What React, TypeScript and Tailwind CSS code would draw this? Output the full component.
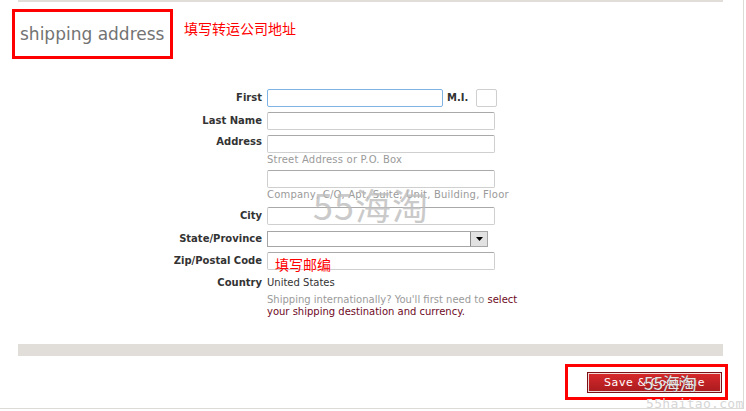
import React from "react"

const font = "font-['DejaVu_Sans','Noto_Sans_CJK_SC',sans-serif]"
const cjk = "font-['Noto_Sans_CJK_SC',sans-serif]"

const Field = ({ label, children }: { label?: string; children: React.ReactNode }) => (
  <div className="flex items-center">
    <div className="w-[103px] pr-[1px] text-right text-[10px] font-bold leading-[12px] text-[#333]">{label}</div>
    <div className="ml-[4px]">{children}</div>
  </div>
)

const Input = ({ w = "w-[228px]", focus = false }: { w?: string; focus?: boolean }) => (
  <div
    className={`h-[18px] rounded-[2px] border bg-white ${w} ${
      focus ? "border-[#7fb3e3]" : "border-[#cfcfcf] border-t-[#a9a9a9]"
    }`}
  />
)

const Hint = ({ children }: { children: React.ReactNode }) => (
  <div className="ml-[107px] h-[13px] whitespace-nowrap text-[10px] leading-[13px] tracking-[0.2px] text-[#9a9a9a]">
    {children}
  </div>
)

export default function App() {
  return (
    <div className={`relative h-[411px] w-[746px] overflow-hidden bg-white ${font}`}>
      <div className="h-[409px] w-[744px] border-b border-r border-[#dedad6]">
        <div className="ml-[18px] h-[2px] w-[705px] bg-[#e1ddd9]" />

        <div className="mt-[7px] flex items-start">
          <div className="ml-[12px] flex h-[50px] w-[161px] items-center border-[3px] border-[#ff0000] pl-[5px]">
            <span className="whitespace-nowrap text-[17px] leading-none text-[#737373]">shipping address</span>
          </div>
          <span className={`ml-[11px] mt-[12px] text-[14px] leading-none text-[#ff0000] ${cjk}`}>填写转运公司地址</span>
        </div>

        <div className="ml-[160px] mt-[30px] flex flex-col">
          <div className="flex items-center">
            <Field label="First">
              <Input w="w-[176px]" focus />
            </Field>
            <span className="ml-[4px] text-[10px] font-bold leading-[12px] text-[#333]">M.I.</span>
            <div className="ml-[8px] h-[18px] w-[21px] rounded-[2px] border border-[#cfcfcf]" />
          </div>
          <div className="mt-[5px]">
            <Field label="Last Name">
              <Input />
            </Field>
          </div>
          <div className="mt-[5px] flex items-start">
            <div className="mt-[1px] w-[103px] pr-[1px] text-right text-[10px] font-bold leading-[12px] text-[#333]">
              Address
            </div>
            <div className="ml-[4px]">
              <Input />
            </div>
          </div>
          <Hint>Street Address or P.O. Box</Hint>
          <div className="ml-[107px] mt-[4px]">
            <Input />
          </div>
          <Hint>Company, C/O, Apt, Suite, Unit, Building, Floor</Hint>
          <div className="mt-[6px]">
            <Field label="City">
              <Input />
            </Field>
          </div>
          <div className="mt-[6px]">
            <Field label="State/Province">
              <div className="flex h-[16px] w-[221px] items-stretch border border-[#a6a6a6] bg-white">
                <div className="flex-1" />
                <div className="flex w-[17px] items-center justify-center border-l border-[#8a8a8a] bg-[#e2e2e2]">
                  <svg width="7" height="4" viewBox="0 0 7 4">
                    <path d="M0 0h7L3.5 4z" fill="#000" />
                  </svg>
                </div>
              </div>
            </Field>
          </div>
          <div className="mt-[5px]">
            <Field label="Zip/Postal Code">
              <div className="relative">
                <Input />
                <span className={`absolute left-[8px] top-[5px] text-[14px] leading-none text-[#ff0000] ${cjk}`}>
                  填写邮编
                </span>
              </div>
            </Field>
          </div>
          <div className="mt-[7px]">
            <Field label="Country">
              <span className="block text-[10px] leading-[12px] text-[#333]">United States</span>
            </Field>
          </div>
          <div className="ml-[107px] mt-[5px] w-[256px] text-[10px] leading-[12px] text-[#9a9a9a]">
            Shipping internationally? You'll first need to{" "}
            <span className="text-[#6e0a24]">select your shipping destination and currency.</span>
          </div>
        </div>

        <div className="ml-[18px] mt-[26px] h-[12px] w-[705px] bg-[#e1ddd9]" />

        <div className="mt-[8px] flex justify-end pr-[15px]">
          <div className="flex h-[36px] w-[163px] items-center justify-end border-[3px] border-[#ff0000] pr-[3px]">
            <button className="relative flex h-[21px] w-[135px] items-center justify-center border border-[#7a1216] bg-gradient-to-b from-[#d9292c] to-[#a91b1e] shadow-[inset_0_0_0_1px_#f3d6d6]">
              <span className="text-[11px] leading-none tracking-[0.6px] text-white">Save &amp; Continue</span>
              <span
                className={`absolute left-[56px] top-[0px] text-[17px] leading-[20px] text-[#e6e6e6] [text-shadow:0_0_1px_#555] ${cjk}`}
              >
                55海淘
              </span>
            </button>
          </div>
        </div>
      </div>

      <span
        className={`pointer-events-none absolute left-[313px] top-[186px] text-[36px] leading-none tracking-[1px] text-[#bdbdbd] opacity-80 ${cjk}`}
      >
        55海淘
      </span>
      <span className="absolute left-[646px] top-[397px] font-['DejaVu_Sans_Mono',monospace] text-[13px] leading-none tracking-[0.3px] text-[#d6d6d6]">
        55haitao.com
      </span>
    </div>
  )
}
